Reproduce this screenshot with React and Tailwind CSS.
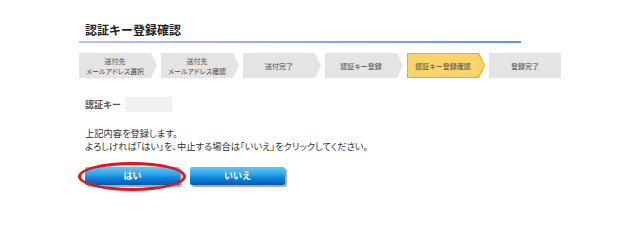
import React from "react";

const steps = [
  { lines: ["送付先", "メールアドレス選択"] },
  { lines: ["送付先", "メールアドレス確認"] },
  { lines: ["送付完了"] },
  { lines: ["認証キー登録"] },
  { lines: ["認証キー登録確認"], active: true },
  { lines: ["登録完了"], last: true },
];

function Step({ s }) {
  const text = (
    <div className="flex flex-col items-center justify-center text-[7px] leading-[10px] text-[#4a4a4a] [font-feature-settings:'palt']">
      {s.lines.map((l) => (
        <span key={l}>{l}</span>
      ))}
    </div>
  );
  if (s.last) {
    return (
      <div className="w-[72px] h-[25px] bg-[#e4e4e4] flex items-center justify-center">
        {text}
      </div>
    );
  }
  if (s.active) {
    return (
      <div className="w-[78px] h-[25px] bg-[#f6a71c] p-[1px] [clip-path:polygon(0_0,calc(100%_-_6px)_0,100%_50%,calc(100%_-_6px)_100%,0_100%)]">
        <div className="w-full h-full bg-[#fdd46b] pr-[6px] flex items-center justify-center [clip-path:polygon(0_0,calc(100%_-_6px)_0,100%_50%,calc(100%_-_6px)_100%,0_100%)]">
          {text}
        </div>
      </div>
    );
  }
  return (
    <div className="w-[78px] h-[25px] bg-[#e4e4e4] pr-[6px] flex items-center justify-center [clip-path:polygon(0_0,calc(100%_-_6px)_0,100%_50%,calc(100%_-_6px)_100%,0_100%)]">
      {text}
    </div>
  );
}

function BlueButton({ children }) {
  return (
    <button className="w-[95px] h-[18px] rounded-[2px] bg-[linear-gradient(to_bottom,#63c6f6_0%,#2ea6ec_40%,#0f86da_60%,#0556b4_100%)] text-white text-[9px] font-bold flex items-center justify-center shadow-[2px_2px_1px_rgba(0,0,0,0.35)]">
      {children}
    </button>
  );
}

export default function App() {
  return (
    <div
      className="w-[640px] h-[234px] bg-white pl-[79px] pt-[22px] text-[#333]"
      style={{ fontFamily: '"Noto Sans CJK JP", "Noto Sans", sans-serif' }}
    >
      <h1 className="pl-[6px] text-[12px] leading-[16px] font-bold text-[#222]">
        認証キー登録確認
      </h1>
      <div className="mt-[3px] w-[442px] h-[2px] bg-[linear-gradient(to_right,#b5c3ef,#5a9bd0)]" />

      <div className="mt-[10px] flex gap-[4px]">
        {steps.map((s, i) => (
          <Step key={i} s={s} />
        ))}
      </div>

      <div className="mt-[19px] pl-[6px] flex items-center gap-[4px]">
        <span className="text-[9px] leading-[15px] font-bold text-[#555]">認証キー</span>
        <div className="w-[47px] h-[15px] bg-[#f1f1f1]" />
      </div>

      <div className="mt-[15px] pl-[6px] text-[9.25px] leading-[13px] text-[#333] [font-feature-settings:'palt']">
        <p>上記内容を登録します。</p>
        <p>よろしければ「はい」を、中止する場合は「いいえ」をクリックしてください。</p>
      </div>

      <div className="mt-[14px] pl-[6px] flex gap-[10px]">
        <div className="relative">
          <BlueButton>はい</BlueButton>
          <div className="absolute left-[-7px] top-[-5px] w-[108px] h-[29px] rounded-[50%] border-[3px] border-[#e3141c]" />
        </div>
        <BlueButton>いいえ</BlueButton>
      </div>
    </div>
  );
}
